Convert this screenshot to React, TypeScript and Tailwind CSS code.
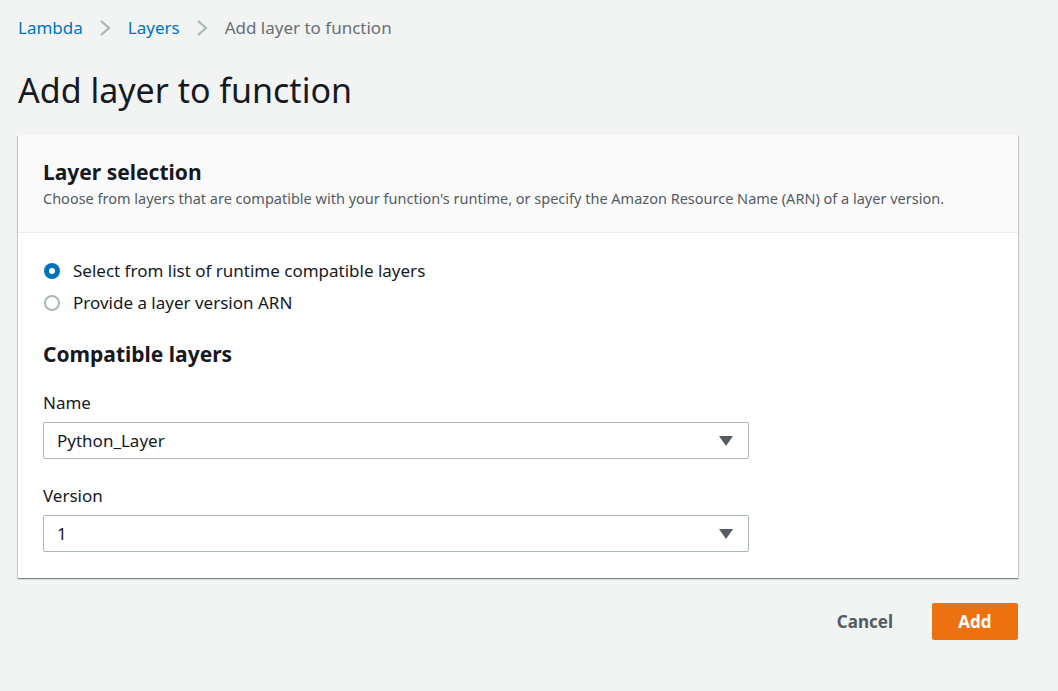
import React from "react";

const Caret = () => (
  <svg width="14" height="10" viewBox="0 0 14 10" className="shrink-0">
    <path d="M0 0 H14 L7 10 Z" fill="#545b64" />
  </svg>
);

const Chevron = () => (
  <svg width="12" height="18" viewBox="0 0 12 18" className="shrink-0">
    <path d="M2 2 L10 9 L2 16" fill="none" stroke="#aab7b8" strokeWidth="2.2" />
  </svg>
);

function Select({ value }: { value: string }) {
  return (
    <div className="flex h-[37px] w-[706px] items-center justify-between rounded-[2px] border border-[#aab7b8] bg-white pl-[13px] pr-[15px] text-[17px] text-[#16191f]">
      <span>{value}</span>
      <Caret />
    </div>
  );
}

export default function App() {
  return (
    <div
      className="min-h-[691px] bg-[#f2f3f3] px-[18px] pt-[16px]"
      style={{ fontFamily: '"Noto Sans", "Open Sans", Arial, sans-serif' }}
    >
      <nav className="flex h-[24px] items-center text-[17px]">
        <span className="text-[#0073bb]">Lambda</span>
        <span className="ml-[16px] mr-[17px] flex"><Chevron /></span>
        <span className="text-[#0073bb]">Layers</span>
        <span className="ml-[16px] mr-[17px] flex"><Chevron /></span>
        <span className="text-[#687078]">Add layer to function</span>
      </nav>
      <h1 className="mt-[28px] text-[34px] leading-[44px] font-normal text-[#16191f]">Add layer to function</h1>
      <div className="mt-[23px] w-[1000px] bg-white shadow-[0_1px_1px_0_rgba(0,28,36,0.3),1px_1px_1px_0_rgba(0,28,36,0.15),-1px_1px_1px_0_rgba(0,28,36,0.15)]">
        <div className="h-[98px] border-b border-[#eaeded] bg-[#fafafa] px-[25px] pt-[23px]">
          <h2 className="text-[21px] leading-[28px] font-bold text-[#16191f]">Layer selection</h2>
          <p className="mt-[3px] text-[14.5px] leading-[18px] text-[#545b64]">
            Choose from layers that are compatible with your function's runtime, or specify the Amazon Resource Name (ARN) of a layer version.
          </p>
        </div>
        <div className="px-[25px] pt-[26px] pb-[26px]">
          <div className="flex flex-col gap-[8px] text-[17px] text-[#16191f]">
            <label className="flex h-[24px] items-center gap-[13px]">
              <span className="ml-[1px] flex h-[16px] w-[16px] items-center justify-center rounded-full bg-[#0073bb]">
                <span className="h-[6px] w-[6px] rounded-full bg-white" />
              </span>
              <span>Select from list of runtime compatible layers</span>
            </label>
            <label className="flex h-[24px] items-center gap-[13px]">
              <span className="ml-[1px] h-[16px] w-[16px] rounded-full border-2 border-[#aab7b8] bg-white" />
              <span>Provide a layer version ARN</span>
            </label>
          </div>
          <h3 className="mt-[25px] text-[21px] leading-[28px] font-bold text-[#16191f]">Compatible layers</h3>
          <div className="mt-[24px]">
            <div className="text-[17px] leading-[22px] text-[#16191f]">Name</div>
            <div className="mt-[8px]"><Select value="Python_Layer" /></div>
          </div>
          <div className="mt-[26px]">
            <div className="text-[17px] leading-[22px] text-[#16191f]">Version</div>
            <div className="mt-[8px]"><Select value="1" /></div>
          </div>
        </div>
      </div>
      <div className="mt-[25px] flex w-[1000px] items-center justify-end">
        <button className="mr-[39px] text-[17px] font-bold text-[#545b64]">Cancel</button>
        <button className="h-[37px] w-[86px] rounded-[2px] bg-[#ec7211] text-[17px] font-bold text-white">Add</button>
      </div>
    </div>
  );
}
